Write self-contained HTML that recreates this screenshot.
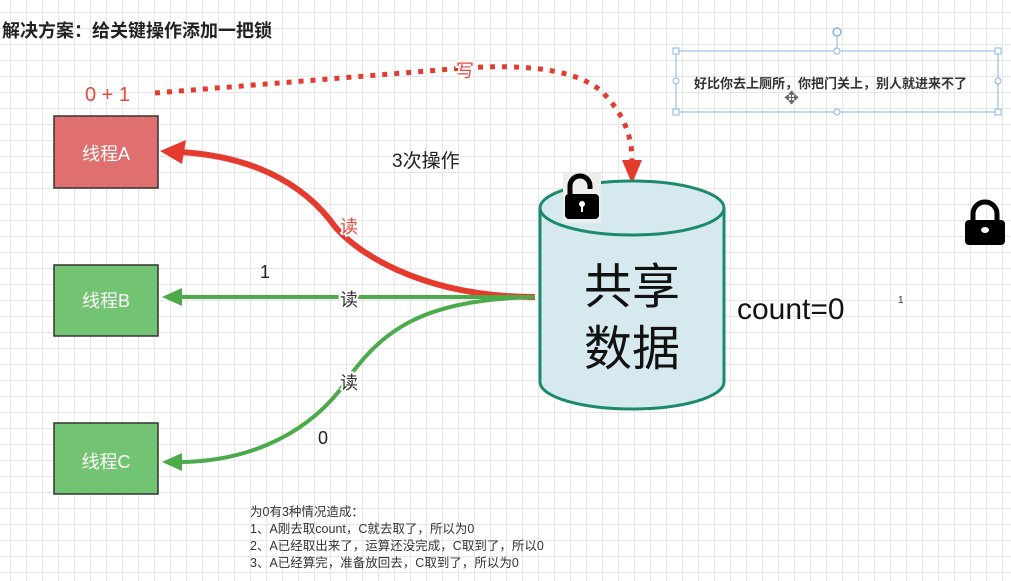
<!DOCTYPE html>
<html><head><meta charset="utf-8"><style>
body{margin:0;width:1011px;height:581px;overflow:hidden;background:#fff;font-family:"Liberation Sans","Noto Sans CJK SC",sans-serif}
.grid{position:absolute;left:0;top:0;width:1011px;height:581px;background-image:linear-gradient(#e6e6e6 1px,transparent 1px),linear-gradient(90deg,#e6e6e6 1px,transparent 1px);background-size:16px 16px;background-position:-6px -4px}
</style></head><body>
<div class="grid"></div>
<svg width="1011" height="581" style="position:absolute;left:0;top:0" font-family="Liberation Sans, Noto Sans CJK SC, sans-serif">
<text x="2" y="37" font-size="18" font-weight="bold" fill="#222">解决方案：给关键操作添加一把锁</text>
<text x="85" y="101" font-size="20" fill="#e8473a">0 + 1</text>
<path d="M155 93 L440 70 Q560 58 600 90 Q632 120 632 160" fill="none" stroke="#e53b2f" stroke-width="5" stroke-dasharray="5 7"/>
<polygon points="622,160 642,160 632,184" fill="#e53b2f"/>
<text x="456" y="77" font-size="18" fill="#e8473a" stroke="#fff" stroke-width="4" paint-order="stroke">写</text>
<rect x="54" y="116" width="104" height="72" fill="#e07070" stroke="#333" stroke-width="1.5"/>
<text x="106" y="160" font-size="18" fill="#fff" text-anchor="middle">线程A</text>
<rect x="54" y="265" width="104" height="71" fill="#72c372" stroke="#333" stroke-width="1.5"/>
<text x="106" y="307" font-size="18" fill="#fff" text-anchor="middle">线程B</text>
<rect x="54" y="423" width="104" height="71" fill="#72c372" stroke="#333" stroke-width="1.5"/>
<text x="106" y="468" font-size="18" fill="#fff" text-anchor="middle">线程C</text>
<path d="M535 297 C420 297 350 250 330 220 C290 170 230 155 180 152" fill="none" stroke="#e53b2f" stroke-width="6"/>
<polygon points="160,151 186,140 182,164" fill="#e53b2f"/>
<path d="M535 297 L178 297" stroke="#4caa4a" stroke-width="4"/>
<polygon points="162,297 182,288 182,306" fill="#4caa4a"/>
<path d="M535 297 C420 300 380 330 340 390 C300 440 240 462 178 462" fill="none" stroke="#4caa4a" stroke-width="4"/>
<polygon points="162,462 182,453 182,471" fill="#4caa4a"/>
<text x="349" y="233" font-size="18" fill="#e8473a" text-anchor="middle" stroke="#fff" stroke-width="4" paint-order="stroke">读</text>
<text x="349" y="306" font-size="18" fill="#333" text-anchor="middle" stroke="#fff" stroke-width="4" paint-order="stroke">读</text>
<text x="349" y="389" font-size="18" fill="#333" text-anchor="middle" stroke="#fff" stroke-width="4" paint-order="stroke">读</text>
<text x="392" y="167" font-size="19" fill="#222">3次操作</text>
<text x="260" y="278" font-size="18" fill="#222">1</text>
<text x="318" y="444" font-size="18" fill="#222">0</text>
<path d="M540 208 L540 382 A92 27 0 0 0 724 382 L724 208" fill="#d5e9ee" stroke="#1a8a6a" stroke-width="3"/>
<ellipse cx="632" cy="208" rx="92" ry="27" fill="#d5e9ee" stroke="#1a8a6a" stroke-width="3"/>
<text x="632" y="303" font-size="48" fill="#111" text-anchor="middle">共享</text>
<text x="632" y="365" font-size="48" fill="#111" text-anchor="middle">数据</text>
<text x="737" y="319" font-size="30" fill="#111">count=0</text>
<text x="898" y="303" font-size="10" fill="#333">1</text>
<rect x="563" y="173" width="38" height="50" fill="#eee"/>
<path d="M570 194 L570 186 A10 10 0 0 1 590 186 L590 189" fill="none" stroke="#000" stroke-width="5"/>
<rect x="565" y="194" width="34" height="25" rx="4" fill="#000"/>
<circle cx="582" cy="204" r="3" fill="#fff"/><rect x="581" y="204" width="2" height="8" fill="#fff"/>
<path d="M973 222 L973 214 A12 12 0 0 1 997 214 L997 222" fill="none" stroke="#000" stroke-width="5"/>
<rect x="965" y="220" width="40" height="25" rx="4" fill="#000"/>
<ellipse cx="985" cy="230" rx="4" ry="3" fill="#fff"/>
<rect x="676" y="51" width="322" height="61" fill="none" stroke="#86b5e8" stroke-width="1"/>
<line x1="837" y1="33" x2="837" y2="51" stroke="#86b5e8"/>
<circle cx="837" cy="32" r="4" fill="#fff" stroke="#86b5e8" stroke-width="1.5"/>
<g fill="#fff" stroke="#86b5e8"><rect x="673" y="48" width="6" height="6"/><rect x="995" y="48" width="6" height="6"/><rect x="673" y="109" width="6" height="6"/><rect x="995" y="109" width="6" height="6"/>
<circle cx="837" cy="51" r="3"/><circle cx="837" cy="112" r="3"/><circle cx="676" cy="81" r="3"/><circle cx="998" cy="81" r="3"/></g>
<text x="694" y="88" font-size="13" font-weight="bold" fill="#333">好比你去上厕所，你把门关上，别人就进来不了</text>
<text x="784" y="104" font-size="18" fill="#666">✥</text>
<g font-size="12.5" fill="#333"><text x="250" y="516">为0有3种情况造成：</text><text x="250" y="533">1、A刚去取count，C就去取了，所以为0</text><text x="250" y="550">2、A已经取出来了，运算还没完成，C取到了，所以0</text><text x="250" y="567">3、A已经算完，准备放回去，C取到了，所以为0</text></g>
</svg>
</body></html>
